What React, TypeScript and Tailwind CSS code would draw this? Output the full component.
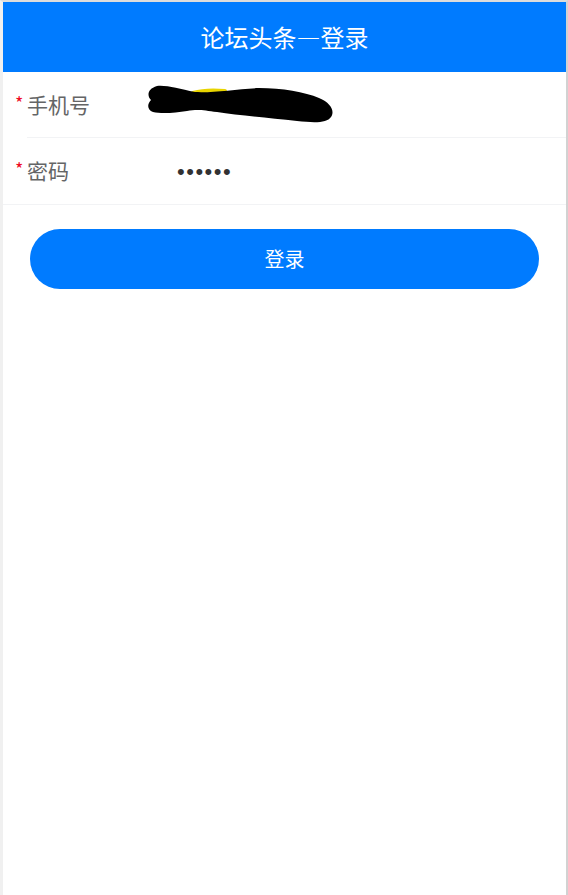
import React from 'react';

const font = { fontFamily: '"Noto Sans CJK SC", "Liberation Sans", sans-serif' };

// redaction scribble over the phone number
function Scribble() {
    return (
        <svg width="188" height="40" viewBox="0 0 188 40" className="block">
            <path d="M46 8 C 56 5, 68 5, 78 6" stroke="#e8d400" strokeWidth="4" fill="none" strokeLinecap="round" />
            <path
                d="M10 1 C 20 0, 32 4, 48 7 C 66 8, 90 4, 112 3 C 135 3, 158 7, 172 13 C 184 18, 188 26, 184 32 C 180 38, 168 38, 150 36 C 120 33, 90 30, 70 27 C 56 25, 50 24, 40 26 C 28 28, 14 29, 6 27 C 0 25, 0 19, 4 15 C 0 11, 0 4, 10 1 Z"
                fill="#000"
            />
        </svg>
    );
}

function Field({ label, children, last }: { label: string; children: React.ReactNode; last?: boolean }) {
    return (
        <div className="relative flex h-[66px] items-center pl-[12px] pr-6">
            <span className="w-[12px] text-[18px] leading-none text-[#ee0a24] -mt-[6px]">*</span>
            <span className="w-[120px] text-[21px] text-[#646566]">{label}</span>
            <div className="flex-1 flex items-center">{children}</div>
            {!last && <div className="absolute bottom-0 left-[24px] right-0 h-px bg-[#f2f3f5]" />}
        </div>
    );
}

export default function App() {
    return (
        <div
            className="w-[568px] h-[895px] bg-white border-t-2 border-t-[#dcdcdc] border-l-[3px] border-l-[#f0f0f0] border-r-2 border-r-[#d2d2d2] flex flex-col"
            style={font}
        >
            <div className="h-[70px] bg-[#007bff] flex items-center justify-center">
                <span className="text-[24px] text-white">
                    论坛头条<span className="[font-feature-settings:'fwid']">—</span>登录
                </span>
            </div>

            <div className="border-b border-[#f2f3f5]">
                <Field label="手机号">
                    <Scribble />
                </Field>
                <Field label="密码" last>
                    <span className="pl-[30px] text-[22px] tracking-[1.5px] text-[#323233] font-['Liberation_Sans',sans-serif]">
                        ••••••
                    </span>
                </Field>
            </div>

            <div className="px-[27px] pt-6">
                <button className="w-full h-[60px] rounded-full bg-[#007bff] text-white text-[20px]">登录</button>
            </div>
        </div>
    );
}
